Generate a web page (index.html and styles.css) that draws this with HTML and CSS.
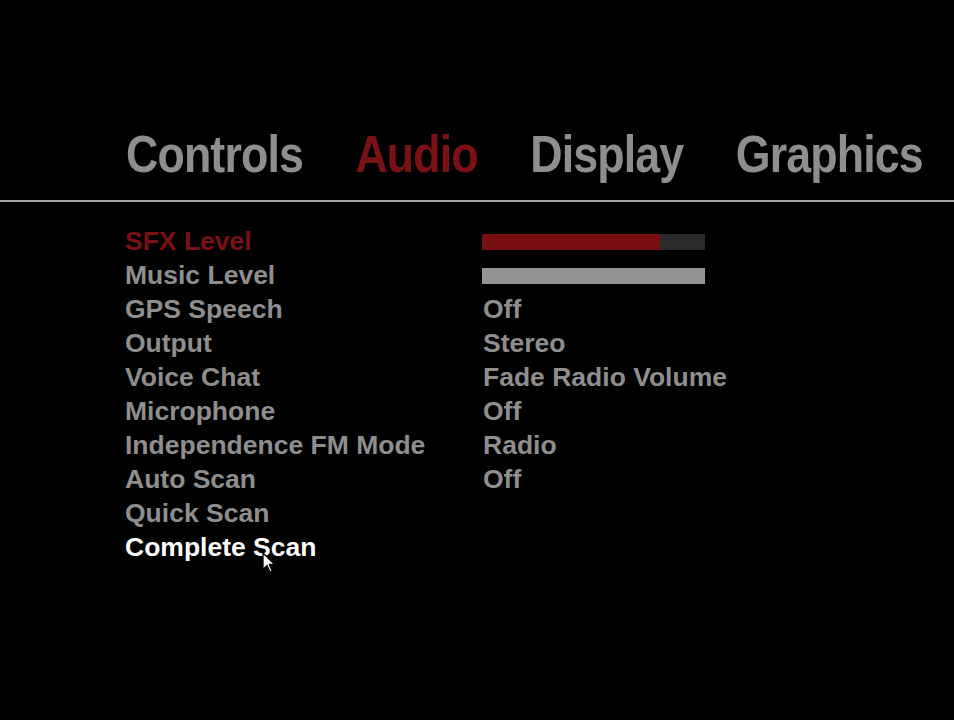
FILE: index.html
```html
<!DOCTYPE html>
<html>
    <head>
        <meta charset='UTF-8'>
        <link rel="stylesheet" href="styles.css">
    </head>
    <body>
        <header class="top">
            <nav class="tabs">
                <span class="tab">Controls</span>
                <span class="tab active">Audio</span>
                <span class="tab">Display</span>
                <span class="tab">Graphics</span>
            </nav>
        </header>
        <div class="rule"></div>
        <main class="menu">
            <div class="row active">
                <span class="label">SFX Level</span>
                <span class="value"><span class="bar"><span class="fill red" style="width: 80%"></span></span></span>
            </div>
            <div class="row">
                <span class="label">Music Level</span>
                <span class="value"><span class="bar"><span class="fill" style="width: 100%"></span></span></span>
            </div>
            <div class="row">
                <span class="label">GPS Speech</span>
                <span class="value">Off</span>
            </div>
            <div class="row">
                <span class="label">Output</span>
                <span class="value">Stereo</span>
            </div>
            <div class="row">
                <span class="label">Voice Chat</span>
                <span class="value">Fade Radio Volume</span>
            </div>
            <div class="row">
                <span class="label">Microphone</span>
                <span class="value">Off</span>
            </div>
            <div class="row">
                <span class="label">Independence FM Mode</span>
                <span class="value">Radio</span>
            </div>
            <div class="row">
                <span class="label">Auto Scan</span>
                <span class="value">Off</span>
            </div>
            <div class="row">
                <span class="label">Quick Scan</span>
                <span class="value"></span>
            </div>
            <div class="row hover">
                <span class="label">Complete Scan</span>
                <span class="value"></span>
                <svg class="cursor" width="15" height="21" viewBox="0 0 15 21">
                    <path d="M1 1 L1 17.5 L5 13.5 L8 20 L10.3 19 L7.3 12.5 L12.8 12.5 Z" fill="#fff" stroke="#000" stroke-width="1.3" stroke-linejoin="round"/>
                </svg>
            </div>
        </main>
    </body>
</html>
```

FILE: styles.css
```css
html, body {
    width: 100%;
    height: 100%;
}

body {
    margin: 0;
    padding: 0;
    background-color: #000;
    color: #8e8e8e;
    font-family: 'Liberation Sans', Arial, sans-serif;
    font-weight: bold;
    overflow: hidden;
}

.top {
    height: 200px;
    padding: 124px 0 0 126px;
    box-sizing: border-box;
}

.tabs {
    display: flex;
    gap: 61px;
    white-space: nowrap;
    transform: scaleX(.86);
    transform-origin: 0 0;
}

.tab {
    font-size: 52px;
    line-height: 60px;
    letter-spacing: -1px;
}

.tab.active {
    color: #7b1015;
}

.rule {
    height: 2px;
    background: #a4a4a4;
}

.menu {
    padding: 22px 0 0 125px;
}

.row {
    position: relative;
    display: flex;
    height: 34px;
    align-items: center;
    font-size: 26.5px;
}

.label {
    width: 358px;
}

.row.active .label {
    color: #7b1015;
}

.row.hover .label {
    color: #fff;
}

.bar {
    display: block;
    width: 223px;
    height: 16px;
    margin: 2px 0 0 -1px;
    background: #2a2a2a;
}

.fill {
    display: block;
    height: 100%;
    background: #939393;
}

.fill.red {
    background: #770e11;
}

.cursor {
    position: absolute;
    left: 137px;
    top: 22px;
}
```
